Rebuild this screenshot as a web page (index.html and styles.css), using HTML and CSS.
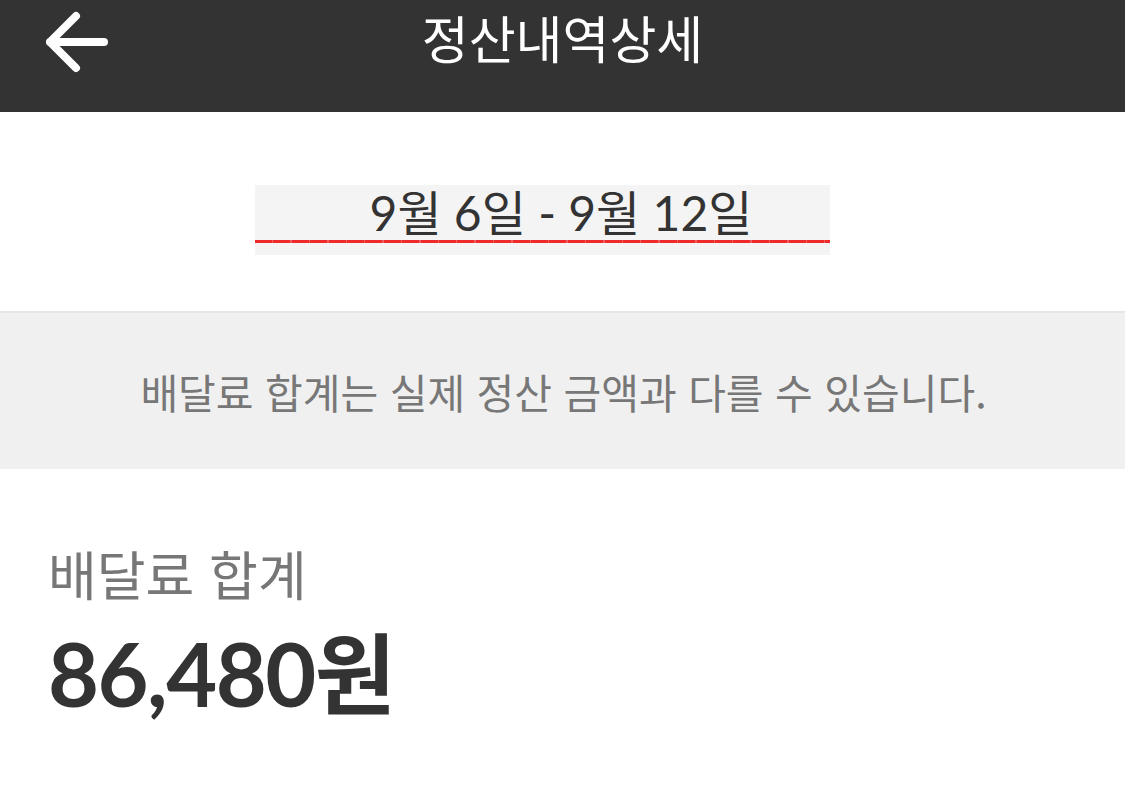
FILE: index.html
```html
<!DOCTYPE html>
<html lang="ko">
<head>
<meta charset="utf-8">
<link rel="stylesheet" href="styles.css">
</head>
<body>
<header class="topbar">
  <div class="back">
    <svg width="64" height="64" viewBox="0 0 64 64">
      <path d="M30 5 L4 31 L30 57 M4 31 L58 31" fill="none" stroke="#fff" stroke-width="8" stroke-linecap="round" stroke-linejoin="round"/>
    </svg>
  </div>
  <h1 class="title">정산내역상세</h1>
  <div></div>
</header>
<section class="period">
  <div class="period-box">
    <span class="period-text">9월 6일 - 9월 12일</span>
    <div class="period-line"></div>
  </div>
</section>
<section class="notice">배달료 합계는 실제 정산 금액과 다를 수 있습니다.</section>
<section class="summary">
  <div class="label">배달료 합계</div>
  <div class="amount">86,480원</div>
</section>
</body>
</html>
```

FILE: styles.css
```css
html, body {
  margin: 0;
  padding: 0;
  background: #fff;
}
body {
  width: 1125px;
  height: 785px;
  overflow: hidden;
  font-family: "Lato", "Noto Sans CJK KR", sans-serif;
}
.topbar {
  height: 112px;
  background: #333333;
  display: grid;
  grid-template-columns: 1fr auto 1fr;
  align-items: start;
}
.back {
  padding: 11px 0 0 46px;
  height: 64px;
}
.back svg { display: block; }
.title {
  margin: 0;
  padding-top: 4px;
  font-family: "Noto Sans CJK KR", sans-serif;
  font-weight: 400;
  font-size: 51px;
  line-height: 66px;
  color: #fff;
}
.period {
  padding: 73px 0 56px;
  display: flex;
  justify-content: center;
}
.period-box {
  width: 575px;
  height: 70px;
  background: #f4f4f4;
  margin-left: -40px;
  display: flex;
  flex-direction: column;
  align-items: center;
}
.period-text {
  font-size: 48px;
  line-height: 52px;
  color: #333;
  margin-top: 2px;
  margin-left: 37px;
}
.period-line {
  align-self: stretch;
  height: 3px;
  margin-top: 1px;
  background: repeating-linear-gradient(90deg, #ee2a2a 0 17px, #f06060 17px 18.4px);
}
.notice {
  border-top: 2px solid #e6e6e6;
  background: #f0f0f0;
  height: 156px;
  display: flex;
  align-items: center;
  justify-content: center;
  font-family: "Noto Sans CJK KR", sans-serif;
  font-size: 41px;
  color: #777;
  padding-left: 2px;
}
.summary {
  padding: 72px 0 0 48px;
}
.label {
  font-family: "Noto Sans CJK KR", sans-serif;
  font-size: 53px;
  line-height: 64px;
  color: #777;
}
.amount {
  margin-top: 18px;
  font-weight: 700;
  font-size: 88px;
  line-height: 100px;
  color: #333;
  letter-spacing: -1.5px;
}
```
